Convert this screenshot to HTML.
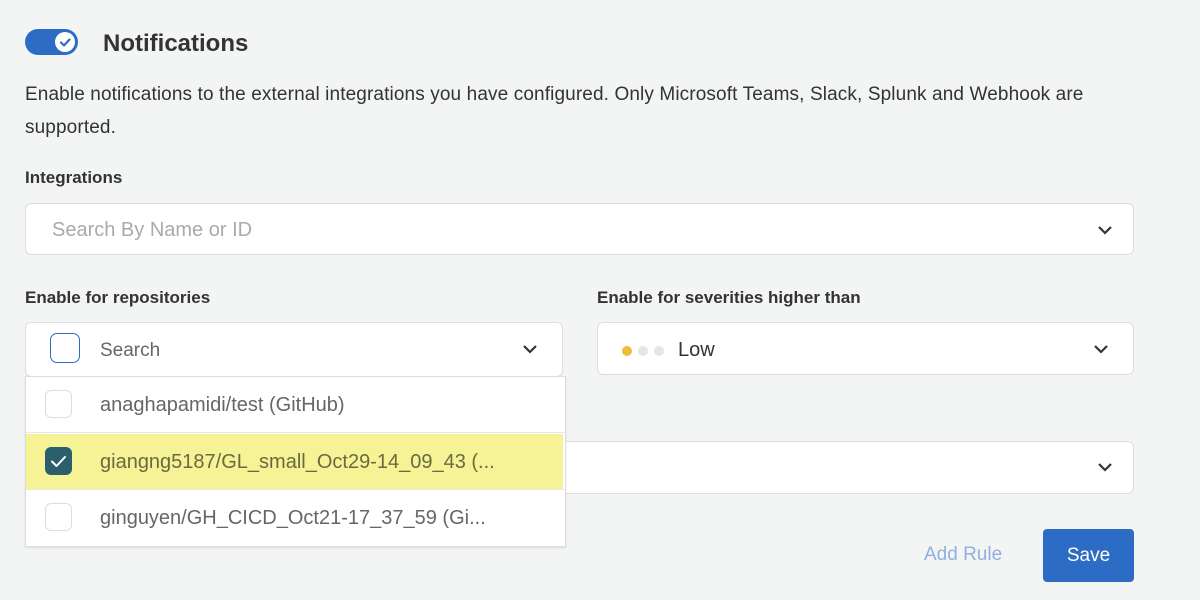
<!DOCTYPE html>
<html><head><style>
body{margin:0;width:1200px;height:600px;background:#f3f4f4;font-family:"Liberation Sans",sans-serif;position:relative;overflow:hidden;color:#333}
.a{position:absolute}
.box{position:absolute;background:#fff;border:1.5px solid #ddd;border-radius:6px;box-sizing:border-box}
.lbl{position:absolute;font-weight:bold;font-size:17px;color:#333}
.chev{position:absolute;width:16px;height:10px}
.cb{position:absolute;width:27px;height:28px;border:1.5px solid #ddd;border-radius:6px;box-sizing:border-box;background:#fff}
.row{position:absolute;left:26px;width:539px;height:56px}
.rt{position:absolute;left:74px;top:17px;font-size:20px;color:#666;white-space:nowrap}
</style></head><body>
<div class="a" style="left:25px;top:29px;width:53px;height:26px;background:#2d6cc5;border-radius:13px"></div>
<div class="a" style="left:55px;top:32px;width:20px;height:20px;background:#fff;border-radius:50%"></div>
<svg class="a" style="left:55px;top:32px" width="20" height="20"><path d="M6 10.5l3 3 5.5-6" stroke="#2d6cc5" stroke-width="2.2" fill="none" stroke-linecap="round" stroke-linejoin="round"/></svg>
<div class="a" style="left:103px;top:30px;font-size:24px;font-weight:bold;color:#333">Notifications</div>
<div class="a" style="left:25px;top:78px;font-size:19px;letter-spacing:0.12px;line-height:33px;color:#333;width:1150px;white-space:nowrap">Enable notifications to the external integrations you have configured. Only Microsoft Teams, Slack, Splunk and Webhook are<br>supported.</div>
<div class="lbl" style="left:25px;top:168px">Integrations</div>
<div class="box" style="left:25px;top:203px;width:1109px;height:52px"></div>
<div class="a" style="left:52px;top:219px;font-size:20px;color:#aaa">Search By Name or ID</div>
<svg class="chev" style="left:1097px;top:225px" viewBox="0 0 16 10"><path d="M2 2l6 6 6-6" stroke="#333" stroke-width="2.2" fill="none"/></svg>
<div class="lbl" style="left:25px;top:288px">Enable for repositories</div>
<div class="lbl" style="left:597px;top:288px">Enable for severities higher than</div>
<div class="box" style="left:25px;top:322px;width:538px;height:55px"></div>
<div class="a" style="left:50px;top:333px;width:30px;height:30px;border:1.5px solid #2d6cc5;border-radius:7px;box-sizing:border-box"></div>
<div class="a" style="left:100px;top:340px;font-size:19px;color:#666">Search</div>
<svg class="chev" style="left:522px;top:344px" viewBox="0 0 16 10"><path d="M2 2l6 6 6-6" stroke="#333" stroke-width="2.2" fill="none"/></svg>
<div class="box" style="left:597px;top:322px;width:537px;height:53px"></div>
<div class="a" style="left:622px;top:346px;width:10px;height:10px;border-radius:50%;background:#f0bc3a"></div>
<div class="a" style="left:638px;top:346px;width:10px;height:10px;border-radius:50%;background:#e6e6e6"></div>
<div class="a" style="left:654px;top:346px;width:10px;height:10px;border-radius:50%;background:#e6e6e6"></div>
<div class="a" style="left:678px;top:339px;font-size:20px;color:#333">Low</div>
<svg class="chev" style="left:1093px;top:344px" viewBox="0 0 16 10"><path d="M2 2l6 6 6-6" stroke="#333" stroke-width="2.2" fill="none"/></svg>
<div class="box" style="left:400px;top:441px;width:734px;height:53px"></div>
<svg class="chev" style="left:1097px;top:462px" viewBox="0 0 16 10"><path d="M2 2l6 6 6-6" stroke="#333" stroke-width="2.2" fill="none"/></svg>
<div class="a" style="left:25px;top:376px;width:541px;height:171px;background:#fff;border:1px solid #ddd;box-sizing:border-box;box-shadow:0 1px 2px rgba(0,0,0,.1)"></div>
<div class="row" style="top:377px"><div class="cb" style="left:19px;top:13px"></div><div class="rt">anaghapamidi/test (GitHub)</div></div>
<div class="a" style="left:26px;top:432px;width:539px;height:1px;background:#e8e8e8"></div>
<div class="row" style="top:434px;background:#f5f396;width:537px"><div class="cb" style="left:19px;top:13px;background:#2b5f6e;border-color:#2b5f6e"></div>
<svg class="a" style="left:19px;top:13px" width="27" height="28"><path d="M7 14.5l4.5 4.5 8.5-9" stroke="#fff" stroke-width="2" fill="none" stroke-linecap="round" stroke-linejoin="round"/></svg>
<div class="rt" style="color:#6a6a40">giangng5187/GL_small_Oct29-14_09_43 (...</div></div>
<div class="a" style="left:26px;top:489px;width:539px;height:1px;background:#e8e8e8"></div>
<div class="row" style="top:490px"><div class="cb" style="left:19px;top:13px"></div><div class="rt">ginguyen/GH_CICD_Oct21-17_37_59 (Gi...</div></div>
<div class="a" style="left:924px;top:544px;font-size:19px;color:#8fb0e0">Add Rule</div>
<div class="a" style="left:1043px;top:529px;width:91px;height:53px;background:#2d6cc5;border-radius:4px;color:#fff;font-size:19px;text-align:center;line-height:53px">Save</div>
</body></html>
